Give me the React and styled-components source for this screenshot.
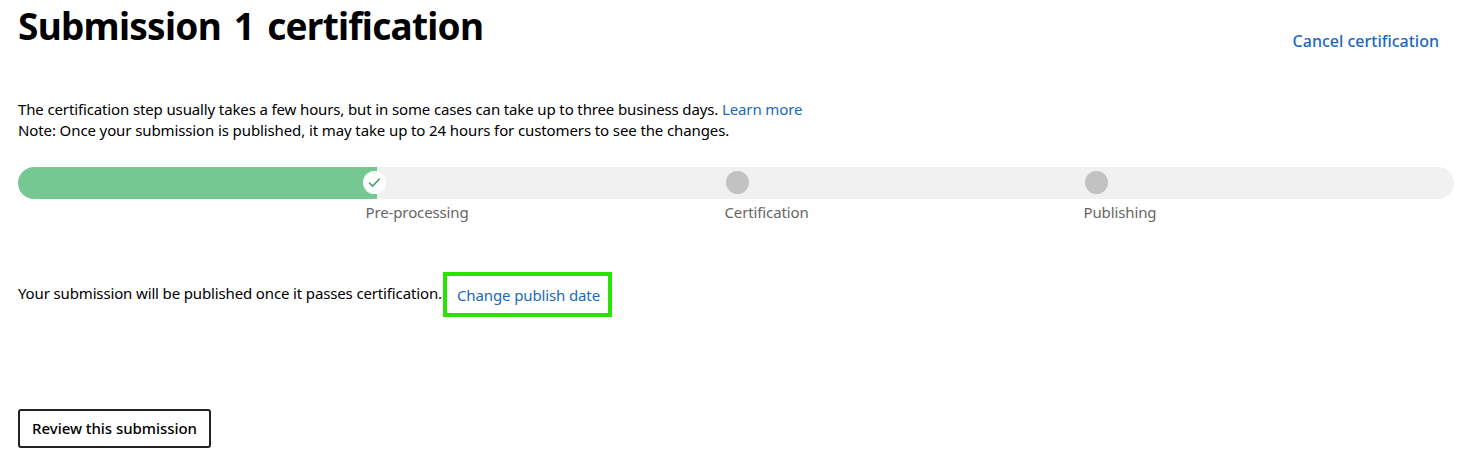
import React from 'react';
import styled, { createGlobalStyle } from 'styled-components';

const GlobalStyle = createGlobalStyle`
  * { box-sizing: border-box; }
  body {
    margin: 0;
    background: #fff;
    color: #000;
    font: 15px/21px "Segoe UI", "Noto Sans", "Open Sans", sans-serif;
    letter-spacing: -0.125px;
  }
`;

const Page = styled.main`
  display: flex;
  flex-direction: column;
  align-items: stretch;
  width: 1459px;
  height: 468px;
  padding: 0 5px 0 18px;
  overflow: hidden;
`;

const Header = styled.header`
  display: flex;
  justify-content: space-between;
  height: 99px;
  padding-right: 15px;
`;

const Title = styled.h1`
  margin: 1px 0 0;
  font-size: 37px;
  line-height: 50px;
  font-weight: 700;
  letter-spacing: -0.74px;
  word-spacing: 4px;
  white-space: nowrap;
`;

const Link = styled.a`
  color: #1a69bd;
  text-decoration: none;
  white-space: nowrap;
`;

const CancelLink = styled(Link)`
  margin-top: 31px;
  font-size: 16px;
  font-weight: 500;
  letter-spacing: 0;
`;

const Intro = styled.div`
  height: 68px;
`;

const Line = styled.p`
  margin: 0;
  letter-spacing: ${({ $spacing }) => $spacing};
  white-space: nowrap;
`;

const Track = styled.div`
  display: grid;
  grid-template-columns: repeat(4, 1fr);
  align-items: start;
  height: 32px;
  padding-top: 4px;
  border-radius: 16px;
  overflow: hidden;
  background: linear-gradient(to right, #76c893 25%, #f1f1f1 25%);
`;

const Marker = styled.span`
  display: flex;
  align-items: center;
  justify-content: center;
  grid-column: ${({ $column }) => $column};
  width: 23px;
  height: 23px;
  margin-left: ${({ $done }) => ($done ? '-14px' : '-10px')};
  border-radius: 50%;
  background: ${({ $done }) => ($done ? '#fff' : '#c2c2c2')};
`;

const Labels = styled.div`
  display: grid;
  grid-template-columns: repeat(4, 1fr);
  height: 84px;
  padding-top: 3px;
`;

const Label = styled.span`
  grid-column: ${({ $column }) => $column};
  margin-left: -11.5px;
  color: #666;
`;

const PublishRow = styled.div`
  display: flex;
  align-items: flex-start;
  height: 126px;
  margin-top: -11px;
`;

const PublishText = styled.p`
  width: 425px;
  margin: 11px 0 0;
  letter-spacing: -0.14px;
  white-space: nowrap;
`;

const Highlight = styled.div`
  display: flex;
  align-items: center;
  justify-content: center;
  width: 169px;
  height: 45px;
  padding: 2px 0 0 2px;
  border: 4px solid #26e600;
`;

const ReviewButton = styled.button`
  width: 193px;
  height: 39px;
  margin-top: 11px;
  padding: 0;
  border: 2px solid #222;
  border-radius: 3px;
  background: #fff;
  color: #000;
  font: inherit;
  font-weight: 500;
  letter-spacing: -0.05px;
  white-space: nowrap;
`;

const steps = [
  { name: 'Pre-processing', done: true },
  { name: 'Certification', done: false },
  { name: 'Publishing', done: false },
];

function CheckIcon() {
  return (
    <svg width="13" height="11" viewBox="0 0 13 11" fill="none" stroke="#479d70" strokeWidth="1.6">
      <path d="M1 5.5 4.5 9 11.7 1.8" />
    </svg>
  );
}

export default function App() {
  return (
    <Page>
      <GlobalStyle />
      <Header>
        <Title>Submission 1 certification</Title>
        <CancelLink>Cancel certification</CancelLink>
      </Header>
      <Intro>
        <Line $spacing="-0.13px">
          The certification step usually takes a few hours, but in some cases can take up to three
          business days. <Link>Learn more</Link>
        </Line>
        <Line $spacing="-0.11px">
          Note: Once your submission is published, it may take up to 24 hours for customers to see
          the changes.
        </Line>
      </Intro>
      <Track>
        {steps.map((step, i) => (
          <Marker key={step.name} $column={i + 2} $done={step.done}>
            {step.done && <CheckIcon />}
          </Marker>
        ))}
      </Track>
      <Labels>
        {steps.map((step, i) => (
          <Label key={step.name} $column={i + 2}>
            {step.name}
          </Label>
        ))}
      </Labels>
      <PublishRow>
        <PublishText>Your submission will be published once it passes certification.</PublishText>
        <Highlight>
          <Link>Change publish date</Link>
        </Highlight>
      </PublishRow>
      <ReviewButton>Review this submission</ReviewButton>
    </Page>
  );
}
